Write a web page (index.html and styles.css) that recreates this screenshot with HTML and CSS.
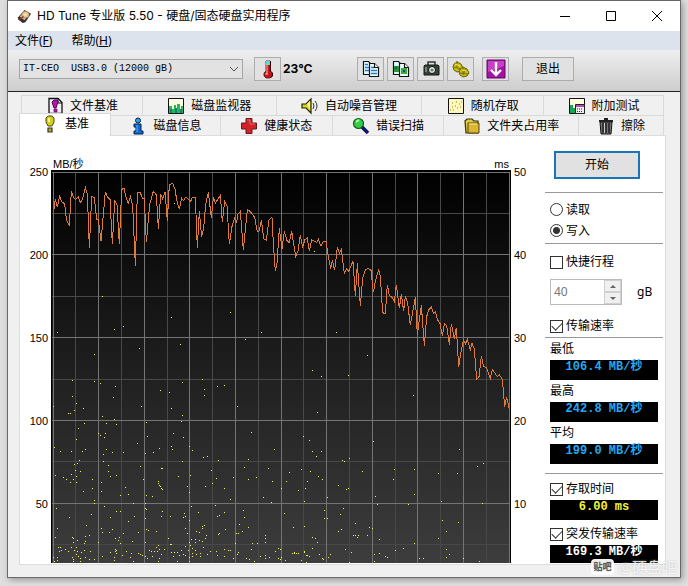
FILE: index.html
```html
<!DOCTYPE html>
<html lang="zh-CN">
<head>
<meta charset="utf-8">
<title>HD Tune 专业版 5.50</title>
<link rel="stylesheet" href="styles.css">
</head>
<body>
<main class="window">
  <header class="titlebar">
    <svg class="app-icon" viewBox="0 0 16 16" aria-hidden="true"><path d="M1 9L8 1l7 4-6 9-3 1-5-4z" fill="#353332"/><path d="M3 8l5-6 5 3-5 7z" fill="#cfc1a9"/><ellipse cx="9" cy="6" rx="4" ry="3.6" fill="#e8c58d" stroke="#907354" stroke-width=".7"/><circle cx="9" cy="6" r="1.2" fill="#fff4d8"/><path d="M3 11l4-3" stroke="#a33b1c" stroke-width="1.5"/></svg>
    <h1 class="title">HD Tune 专业版 5.50 - 硬盘/固态硬盘实用程序</h1>
    <div class="caption-buttons">
      <button aria-label="最小化"><svg viewBox="0 0 12 12"><path d="M1 6.5h10"/></svg></button>
      <button aria-label="最大化"><svg viewBox="0 0 12 12"><path d="M1.500 1.500h9v9h-9z"/></svg></button>
      <button aria-label="关闭"><svg viewBox="0 0 12 12"><path d="M1 1l10 10M11 1L1 11"/></svg></button>
    </div>
  </header>
  <nav class="menu">
    <button>文件(<u>F</u>)</button>
    <button>帮助(<u>H</u>)</button>
  </nav>
  <div class="toolbar">
    <span class="drive">
      <select aria-label="驱动器"><option>IT-CEO&nbsp; USB3.0 (12000 gB)</option></select>
      <svg class="chevron" viewBox="0 0 10 6" aria-hidden="true"><path d="M1 1l4 4 4-4"/></svg>
    </span>
    <button class="tool" aria-label="温度"><svg viewBox="0 0 20 20"><path d="M8 2h4v10l2 2v3l-2 2H8l-2-2v-3l2-2z" fill="#c9161d" stroke="#4d1515" stroke-width=".8"/><path d="M8 2h4v4H8z" fill="#62d6d2"/><path d="M9 5v10" stroke="#ffb0a5"/><path d="M12.500 2v10l2 2v3l-2 2" fill="none" stroke="#300"/><path d="M7.500 15h2" stroke="#fff"/></svg></button>
    <output class="temp">23℃</output>
    <div class="tools">
      <button class="tool" aria-label="复制文本"><svg viewBox="0 0 20 20"><g stroke="#111" stroke-width="1.200"><path d="M2.500 2.500h5l3 3v10h-8z" fill="#e8fbff"/><path d="M8.500 4.500h5l4 4v9h-9z" fill="#f3fbff"/><path d="M13.500 4.500v4h4" fill="#fff"/></g><path d="M4 5.500h3M4 8.500h4M4 11.500h4M10 8.500h3M10 11.500h6M10 14.500h6" stroke="#2379c9" stroke-width="1.300"/></svg></button>
      <button class="tool" aria-label="复制图片"><svg viewBox="0 0 20 20"><g stroke="#111" stroke-width="1.200"><path d="M2.500 2.500h5l3 3v10h-8z" fill="#dff"/><path d="M8.500 4.500h5l4 4v9h-9z" fill="#efffff"/><path d="M13.500 4.500v4h4" fill="#fff"/></g><path d="M3 7h5v6H3z" fill="#27992b"/><path d="M10 9h6v6h-6z" fill="#3aac32"/><path d="M4 8h2v2H4zM12 11h2v2h-2z" fill="#154b9b"/></svg></button>
      <button class="tool" aria-label="截图"><svg viewBox="0 0 20 20"><path d="M7 6V3h7v3" fill="none" stroke="#303531" stroke-width="1.500"/><path d="M4 6h13l1 1v9H3V7z" fill="#38413c" stroke="#151b17"/><circle cx="11" cy="11" r="3.500" fill="#eaf3ed" stroke="#0a0d0b"/><circle cx="11" cy="11" r="1.600" fill="#64776c"/><path d="M4 8h2v5H4z" fill="#768279"/></svg></button>
      <button class="tool" aria-label="设置"><svg viewBox="0 0 20 20"><g fill="#c7bd18" stroke="#68620c"><path d="M3 5l3-2 4 2 2 4-2 3-4 1-3-2-1-3z"/><path d="M9 10l3-2 4 2 2 4-2 3-4 1-3-2-1-3z"/></g><path d="M6 2v7M3 8l7 2M12 8v7M9 14l8 1M15 9l-3 7" stroke="#746d09" fill="none"/><path d="M4 5l5 2M11 11l4 1" stroke="#f5ef6b"/></svg></button>
      <button class="tool tool-save" aria-label="保存"><svg viewBox="0 0 20 20"><path d="M1 1h18v18H1z" fill="#a312a5" stroke="#650866"/><path d="M2 2h16v5L2 13z" fill="#c640c8"/><path d="M10 3v13M5 11l5 5 5-5" fill="none" stroke="#fff" stroke-width="2.400"/></svg></button>
      <button class="exit">退出</button>
    </div>
  </div>

  <section class="body">
    <div class="tabs tabs-back" role="tablist">
      <button role="tab" class="w121"><svg viewBox="0 0 18 18"><path d="M3 1.500h9l4 4v11H3z" fill="#f4eef5" stroke="#111" stroke-width="1.300"/><path d="M12 2v4h4" fill="none" stroke="#111"/><path d="M6 5l2-2h3l1 2-2 6H8z" fill="#b713b5" stroke="#4b074b"/><path d="M8 12h3v3H8z" fill="#b713b5" stroke="#4b074b" stroke-width=".6"/></svg>文件基准</button>
      <button role="tab" class="w134"><svg viewBox="0 0 18 18"><path d="M1.500 1.500h15v15h-15z" fill="#fffde1" stroke="#111"/><path d="M2 16V9h3v3h2V8h2v4h1V7h3v5h1V9h2v7z" fill="#23b95a"/><path d="M3 16v-4h2v4M8 16v-5h2v5M13 16v-4h2v4" fill="#12836d"/></svg>磁盘监视器</button>
      <button role="tab" class="w146"><svg viewBox="0 0 18 18"><path d="M1 7h4l5-5v14l-5-5H1z" fill="#d5d22b" stroke="#262600" stroke-width="1.200"/><path d="M6 7l3-3v9" fill="#fffa8a"/><path d="M12 6q2 3 0 6M14 4q4 5 0 10" fill="none" stroke="#333"/></svg>自动噪音管理</button>
      <button role="tab" class="w122"><svg viewBox="0 0 18 18"><path d="M1.500 1.500h15v15h-15z" fill="#fff9bd" stroke="#111"/><path d="M3 13h1M5 10h1M6 13h1M8 9h1M10 11h1M12 7h1M14 5h1M13 10h1M5 6h1M9 5h1" stroke="#9a7b24" stroke-width="1.200"/></svg>随机存取</button>
      <button role="tab" class="w120"><svg viewBox="0 0 18 18"><path d="M1.500 1.500h15v15h-15z" fill="#fffde1" stroke="#111"/><path d="M2 8h3v3h3v5H2z" fill="#16a55a"/><path d="M7.500 7.500h9v9h-9z" fill="#eee" stroke="#222"/><path d="M8 9h8" stroke="#b64ab7" stroke-width="2"/><path d="M9 12h6M9 14.500h6" stroke="#333" stroke-dasharray="1 1"/></svg>附加测试</button>
    </div>
    <div class="tabs tabs-front" role="tablist">
      <button role="tab" class="w91 active" aria-selected="true"><svg viewBox="0 0 18 18"><path d="M5 3l2-2h4l2 2v4l-2 4H7L5 7z" fill="#d6cf22" stroke="#4a4710"/><path d="M8 3v4" stroke="#fffcb0" stroke-width="1.500"/><path d="M7 13h4v4H7z" fill="#b7ae1a" stroke="#333" stroke-width="1.200"/></svg>基准</button>
      <button role="tab" class="w110"><svg viewBox="0 0 18 18"><circle cx="9" cy="3.500" r="2.500" fill="#32a2ec" stroke="#082344"/><path d="M5 7h7v7h2v3H5v-3h2v-4H5z" fill="#1268db" stroke="#082344"/><path d="M8 8v7" stroke="#55bafc"/></svg>磁盘信息</button>
      <button role="tab" class="w112"><svg viewBox="0 0 18 18"><path d="M6 1.500h6V6h4.500v6H12v4.500H6V12H1.500V6H6z" fill="#d32228" stroke="#5a1e20"/><path d="M7 3h3v4h5" fill="none" stroke="#f26762"/></svg>健康状态</button>
      <button role="tab" class="w112"><svg viewBox="0 0 18 18"><path d="M10 10l6 6" stroke="#101464" stroke-width="3.500"/><circle cx="6.500" cy="6.500" r="5" fill="#32ce43" stroke="#145b22" stroke-width="1.200"/><path d="M4 5l3-2" stroke="#b7ffac" stroke-width="2"/></svg>错误扫描</button>
      <button role="tab" class="w135"><svg viewBox="0 0 18 18"><path d="M2 4l2-2h5l2 2h4v12H3z" fill="#e1c93d" stroke="#37300b" stroke-width="1.200"/><path d="M5 6h11v10H5z" fill="#dab632" stroke="#57460b"/><path d="M6 7h8" stroke="#fff58c"/></svg>文件夹占用率</button>
      <button role="tab" class="w85"><svg viewBox="0 0 18 18"><path d="M3 5h12l-1 12H4z" fill="#777" stroke="#111"/><path d="M2 4h14M7 2h4" stroke="#222" stroke-width="2"/><path d="M6 6v10M9 6v10M12 6v10" stroke="#111" stroke-width="1.300"/><path d="M7.500 6v10" stroke="#ccc"/></svg>擦除</button>
    </div>

    <div class="panel">
      <div class="axis axis-left"><span>250</span><span>200</span><span>150</span><span>100</span><span>50</span></div>
      <div class="plot">
        <div class="units"><span>MB/秒</span><span>ms</span></div>
        <svg class="chart" viewBox="0 0 1380 1179" preserveAspectRatio="none" role="img" aria-label="传输速率与存取时间">
          <defs><linearGradient id="bg" x1="0" y1="0" x2="0" y2="1"><stop offset="0" stop-color="#000"/><stop offset="1" stop-color="#3d3d3d"/></linearGradient></defs>
          <rect width="1380" height="1179" fill="url(#bg)"/>
          <path class="minor" d="M74 7V1179M211 7V1179M349 7V1179M484 7V1179M622 7V1179M757 7V1179M895 7V1179M1033 7V1179M1168 7V1179M1306 7V1179M0 130H1375M0 379H1375M0 628H1375M0 874H1375M0 1123H1375"/>
          <path class="major" d="M7 7V1179M142 7V1179M280 7V1179M415 7V1179M553 7V1179M691 7V1179M826 7V1179M964 7V1179M1099 7V1179M1237 7V1179M1375 7V1179M0 7H1380M0 253H1380M0 502H1380M0 751H1380M0 1000H1380"/>
          <path class="edge" d="M0 1.500H1380M1.500 0V1179M1378.500 0V1179"/>
          <g class="access">
            <path transform="translate(-94 -30)" d="M463 130h3M530 238h3M247 409h3M112 517h3M223 583h3M283 508h3M310 499h3M358 565h3M454 472h3M481 553h3M631 457h3M676 538h3M724 517h3"/>
            <path transform="translate(656 90)" d="M133 154h3M199 397h3"/>
            <path transform="translate(-94 540)" d="M157 91h3M223 94h3M241 100h3M286 109h3M487 97h3M547 88h3M592 109h3M613 106h3M421 121h3M448 127h3M553 118h3M553 136h3M157 139h3M280 142h3M169 160h3M100 169h3M364 169h3M652 169h3M190 175h3M163 181h3M145 190h3M151 190h3M454 175h3M487 196h3M247 199h3M283 208h3M289 223h3M259 220h3M193 220h3M379 217h3M484 214h3M175 235h3M235 250h3M241 256h3M256 250h3M253 262h3M460 250h3M490 262h3M694 247h3M382 259h3M169 268h3M352 280h3M103 292h3M121 304h3M154 304h3M187 304h3M196 298h3M259 298h3M250 313h3M277 307h3M310 307h3M400 307h3M418 295h3M454 289h3M457 298h3M508 289h3M517 301h3M376 310h3M763 298h3M550 322h3M562 319h3M595 331h3M685 328h3M250 334h3M487 334h3M178 331h3M172 340h3M163 343h3M265 346h3M361 349h3M424 355h3M427 355h3M673 352h3M745 355h3M166 361h3M181 364h3M265 364h3M574 361h3M106 376h3M154 373h3M169 379h3M130 382h3M139 388h3M160 388h3M151 397h3M169 397h3M217 388h3M244 397h3M271 379h3M289 376h3M370 388h3M475 379h3M511 376h3M589 385h3M640 382h3M685 388h3M709 382h3M757 394h3M415 394h3M415 400h3M418 406h3M421 409h3M424 415h3M427 418h3M502 409h3M556 409h3M577 400h3M613 415h3M316 412h3M217 415h3M190 424h3M244 424h3M301 436h3M325 433h3M379 436h3M397 439h3M508 427h3M631 448h3M730 442h3M754 457h3M223 451h3M223 460h3M340 460h3M376 460h3M109 475h3M253 469h3M376 475h3M379 478h3M514 469h3M586 466h3M289 484h3M301 484h3M427 484h3M535 487h3M613 487h3M670 481h3M214 493h3M148 502h3M271 502h3M343 499h3M376 505h3M424 499h3M451 499h3M493 490h3M490 502h3M496 499h3M592 499h3M598 496h3M673 502h3M325 514h3M508 511h3M199 526h3M658 523h3M553 526h3M547 529h3M547 535h3M685 532h3M112 535h3M244 535h3M247 547h3M268 547h3M277 538h3M310 550h3M355 547h3M379 538h3M385 541h3M409 544h3M496 535h3M502 550h3M529 544h3M538 547h3M616 538h3M595 553h3M598 550h3M649 550h3M655 550h3M667 544h3M106 562h3M157 562h3M160 565h3M208 556h3M196 559h3M559 556h3M556 565h3M172 571h3M196 574h3M160 577h3M193 580h3M235 577h3M286 565h3M298 562h3M295 571h3M301 580h3M337 574h3M376 577h3M445 565h3M508 577h3M514 568h3M526 568h3M526 577h3M538 571h3M547 574h3M646 580h3M697 580h3M712 580h3M736 556h3M736 565h3M736 577h3M115 592h3M121 592h3M124 601h3M118 604h3M136 598h3M145 604h3M154 592h3M163 601h3M169 592h3M172 604h3M184 607h3M193 601h3M211 604h3M271 607h3M286 598h3M286 604h3M289 601h3M289 610h3M319 604h3M334 610h3M355 610h3M361 613h3M367 616h3M388 601h3M394 604h3M403 604h3M409 592h3M412 604h3M415 586h3M418 598h3M433 598h3M451 583h3M454 583h3M463 607h3M472 607h3M484 601h3M490 613h3M496 589h3M505 601h3M511 586h3M517 595h3M526 601h3M541 610h3M550 592h3M571 604h3M589 604h3M613 598h3M625 601h3M631 601h3M652 613h3M655 607h3M694 598h3M766 604h3M775 595h3M100 622h3M112 622h3M112 631h3M157 622h3M160 628h3M169 613h3M175 619h3M181 625h3M196 622h3M208 628h3M223 628h3M247 619h3M283 622h3M283 631h3M307 616h3M331 622h3M376 619h3M382 625h3M397 619h3M418 625h3M424 613h3M454 607h3M460 619h3M478 616h3M496 616h3M508 622h3M517 610h3M517 619h3M529 613h3M541 619h3M562 613h3M592 616h3M613 619h3M640 625h3M679 625h3M688 628h3M721 619h3M736 616h3M736 625h3M748 622h3M775 625h3M103 635h3M160 635h3M340 635h3M472 635h3M508 635h3M703 635h3M181 635h3M415 635h3"/>
            <path transform="translate(656 540)" d="M292 16h3M127 61h3M154 79h3M235 76h3M430 136h3M142 187h3M100 259h3M118 271h3M310 274h3M13 298h3M127 304h3M154 304h3M139 319h3M568 298h3M217 331h3M223 334h3M238 325h3M640 340h3M622 349h3M94 358h3M121 364h3M58 367h3M277 364h3M373 358h3M433 358h3M505 370h3M562 370h3M145 379h3M157 388h3M370 388h3M7 394h3M49 394h3M112 394h3M205 406h3M34 415h3M106 415h3M85 421h3M229 418h3M235 415h3M433 433h3M172 442h3M316 439h3M103 454h3M4 457h3M322 463h3M415 463h3M514 454h3M637 460h3M163 481h3M220 475h3M43 490h3M211 493h3M163 505h3M172 505h3M517 511h3M565 517h3M256 520h3M103 529h3M70 532h3M214 538h3M205 544h3M298 532h3M307 535h3M529 544h3M250 556h3M256 556h3M265 556h3M262 562h3M292 556h3M127 562h3M136 565h3M505 565h3M142 577h3M328 568h3M433 580h3M25 595h3M31 598h3M16 604h3M67 610h3M73 607h3M73 610h3M79 610h3M85 610h3M103 604h3M103 607h3M109 616h3M112 616h3M118 619h3M127 595h3M148 613h3M157 625h3M160 628h3M175 622h3M181 613h3M226 598h3M244 607h3M313 613h3M328 610h3M346 619h3M352 622h3M376 601h3M400 595h3M448 625h3M460 625h3M529 598h3M538 613h3M529 622h3M580 625h3M31 628h3M34 622h3M46 631h3M94 631h3M109 637h3M238 637h3M313 634h3M628 634h3"/>
          </g>
          <polyline class="speed" transform="translate(-93 -30)" points="102,146 106,118 112,142 119,109 126,126 134,132 139,178 148,197 154,94 161,113 167,119 175,110 181,128 188,116 196,82 202,103 208,263 215,110 223,112 230,178 235,178 243,244 256,95 263,112 270,118 277,253 284,123 291,134 298,253 305,88 312,85 318,112 325,130 331,110 338,136 346,317 352,96 361,98 367,114 373,116 379,247 389,134 400,94 409,104 415,206 422,103 428,116 435,95 442,182 448,74 458,70 465,88 471,124 478,148 485,115 490,122 498,111 512,124 517,113 526,112 532,263 538,154 545,230 551,205 557,134 565,97 574,173 580,112 586,130 594,117 601,106 607,185 614,124 621,137 628,253 636,200 644,174 649,190 654,163 661,154 670,271 682,148 691,155 704,172 712,215 718,212 724,180 731,236 739,240 747,180 756,172 760,250 766,334 771,310 778,205"/>
          <polyline class="speed" transform="translate(657 90)" points="28,86 36,146 43,94 51,122 58,128 65,94 77,169 84,152 91,106 98,143 104,120 112,114 118,154 125,120 140,127 145,118 153,139 160,124 169,124 173,160 182,206 187,181 194,211 202,142 208,160 214,149 223,220 230,206 236,214 249,184 256,287 262,190 271,317 278,235 286,209 295,205 303,211 310,277 317,240 326,208 331,230 338,338 346,341 352,254 358,286 366,292 373,304 379,254 388,325 394,283 401,334 406,287 413,310 421,376 436,292 442,404 454,316 463,437 470,350 476,330 484,322 490,340 496,336 503,360 510,370 517,407 523,371 530,377 538,434 544,371 553,416 559,383 566,502 572,460 580,420 586,432 592,418 601,449 606,430 613,446 620,538 627,530 634,469 641,500 649,502 661,535 667,508 682,530 688,524 697,538 704,620 710,592 718,628"/>
        </svg>
      </div>
      <div class="axis axis-right"><span>50</span><span>40</span><span>30</span><span>20</span><span>10</span></div>

      <aside class="side">
        <button class="start">开始</button>
        <div class="group modes">
          <label class="row"><input type="radio" name="mode">读取</label>
          <label class="row"><input type="radio" name="mode" checked>写入</label>
        </div>
        <div class="group stroke">
          <label class="row"><input type="checkbox">快捷行程</label>
          <div class="spin-row">
            <span class="spin"><input type="text" value="40" aria-label="行程大小" disabled><span class="arrows"><button aria-label="增加" disabled><i class="up"></i></button><button aria-label="减少" disabled><i class="down"></i></button></span></span>
            <span>gB</span>
          </div>
          <label class="row"><input type="checkbox" checked>传输速率</label>
        </div>
        <div class="group rates">
          <span class="name">最低</span><output class="readout">106.4 MB/秒</output>
          <span class="name">最高</span><output class="readout">242.8 MB/秒</output>
          <span class="name">平均</span><output class="readout">199.0 MB/秒</output>
        </div>
        <div class="group times">
          <label class="row"><input type="checkbox" checked>存取时间</label>
          <output class="readout yellow">6.00 ms</output>
          <label class="row"><input type="checkbox" checked>突发传输速率</label>
          <output class="readout white">169.3 MB/秒</output>
        </div>
      </aside>
    </div>
  </section>
  <div class="watermark"><span class="badge">贴吧</span><span>@硬盘吧</span></div>
</main>
</body>
</html>
```
FILE: styles.css
```css
* { box-sizing: border-box; }

body {
  margin: 0;
  padding: 0 7px 7px;
  min-height: 100vh;
  background: #dedede;
  color: #000;
  font: 12px/16px "Noto Sans", "Noto Sans CJK SC", sans-serif;
}

button, input, select { font: inherit; color: inherit; margin: 0; }
button { padding: 0; border: 0; background: none; }

.window {
  position: relative;
  border: 1px solid #686868;
  background: #f0f0f0;
  box-shadow: 2px 2px 6px #999;
}

.titlebar {
  display: flex;
  align-items: center;
  height: 30px;
  padding-left: 9px;
  background: #fff;
}
.app-icon { width: 15px; height: 15px; }
.title {
  flex: 1;
  margin: 0 0 0 5px;
  font-family: Inter, "Noto Sans CJK SC", sans-serif;
  font-size: 12px;
  font-weight: 400;
}
.caption-buttons { display: flex; }
.caption-buttons button { display: grid; place-items: center; width: 46px; height: 28px; }
.caption-buttons svg { width: 12px; height: 12px; fill: none; stroke: #000; }

.menu { display: flex; gap: 19px; height: 19px; padding: 0 7px; background: #dce3ec; }

.toolbar {
  display: flex;
  align-items: center;
  height: 42px;
  padding: 0 106px 4px 11px;
  border-bottom: 1px solid #222;
  background: linear-gradient(#efefef, #cdcdcd);
}
.drive { position: relative; width: 224px; }
.drive select {
  display: block;
  appearance: none;
  width: 100%;
  height: 20px;
  padding: 0 3px;
  border: 1px solid #a5a5a5;
  border-radius: 0;
  background: #e2e2e2;
  font: 10px/16px "Liberation Mono", monospace;
}
.chevron { position: absolute; right: 4px; top: 7px; width: 10px; height: 6px; fill: none; stroke: #555; pointer-events: none; }
.tool, .exit { border: 1px solid #adadad; background: #e1e1e1; height: 24px; }
.tool { display: grid; place-items: center; width: 27px; }
.tool svg { width: 20px; height: 20px; }
.drive + .tool { margin-left: 11px; }
.temp { margin-left: 2px; font-family: Inter, "Noto Sans CJK SC", sans-serif; font-weight: 700; }
.tools { display: flex; gap: 3px; margin-left: auto; }
.tool-save { margin-left: 5px; }
.exit { width: 52px; margin-left: 10px; }

.body { padding: 3px 14px 12px 11px; }
.tabs { display: flex; }
.tabs button {
  display: flex;
  align-items: center;
  justify-content: center;
  gap: 6px;
  height: 20px;
  border: solid #d9d9d9;
  border-width: 1px 1px 0 0;
  white-space: nowrap;
  flex-basis: 0;
}
.tabs svg { width: 18px; height: 18px; }
.tabs-back { padding: 0 2px; }
.tabs-back button:first-child { border-left-width: 1px; }
.tabs-front { padding-right: 2px; align-items: flex-end; }
.tabs-front .active { position: relative; height: 23px; margin: -3px 0 -1px; padding-bottom: 3px; border-left-width: 1px; background: #fff; }
.w85 { flex-grow: 85; }
.w91 { flex-grow: 91; }
.w110 { flex-grow: 110; }
.w112 { flex-grow: 112; }
.w120 { flex-grow: 120; }
.w121 { flex-grow: 121; }
.w122 { flex-grow: 122; }
.w134 { flex-grow: 134; }
.w135 { flex-grow: 135; }
.w146 { flex-grow: 146; }

.panel {
  display: grid;
  grid-template-columns: 31px minmax(0, 1fr) 34px 118px;
  padding: 0 2px 1px 0;
  border: 1px solid #dcdcdc;
  background: #fff;
}
.axis { display: flex; flex-direction: column; padding-top: 29px; font: 11px/14px "Liberation Sans", sans-serif; }
.axis span { height: 83px; }
.axis span:last-child { height: 14px; }
.axis-left { text-align: right; padding-right: 3px; }
.axis-right { padding-left: 3px; }
.units {
  display: flex;
  justify-content: space-between;
  align-items: flex-end;
  height: 34px;
  padding: 0 2px;
  font: 11px/12px "Liberation Sans", "Noto Sans CJK SC", sans-serif;
}
.chart { display: block; width: 100%; height: 393px; shape-rendering: crispEdges; }
.chart path, .chart polyline { fill: none; stroke-width: 3; }
.chart .minor { stroke: #484848; }
.chart .major { stroke: #747474; }
.chart .edge { stroke: #000; }
.chart .access path { stroke: #f4f452; }
.chart .speed { stroke: #dd7a3c; }

.start { width: 86px; height: 28px; margin: 15px 9px 13px; border: 2px solid #1b74b5; background: #e1e1e1; }
.group { border-top: 1px solid #999; }
.row { display: flex; align-items: center; gap: 3px; height: 20px; padding-left: 5px; white-space: nowrap; }
.modes { padding: 6px 0 2px; }
.modes .row { height: 21px; }
.row input { appearance: none; flex: none; width: 13px; height: 13px; border: 1px solid #333; background: #fff; }
.row input[type="radio"] { border-radius: 50%; }
.row input[type="radio"]:checked { background: radial-gradient(circle, #333 0 3px, #fff 4px); }
.row input[type="checkbox"]:checked { display: grid; place-items: center; }
.row input[type="checkbox"]:checked::before {
  content: "";
  width: 9px;
  height: 5px;
  margin-top: -2px;
  border: solid #333;
  border-width: 0 0 1px 1px;
  transform: rotate(-45deg);
}
.stroke { padding: 8px 0 1px; }
.spin-row { display: flex; align-items: center; gap: 15px; margin: 7px 0 11px 5px; }
.spin { display: flex; width: 72px; height: 26px; border: 1px solid #bbb; }
.spin input { flex: 1; min-width: 0; padding: 0 3px; border: 0; background: #fff; color: #777; }
.arrows { display: flex; flex-direction: column; width: 17px; }
.arrows button { display: grid; place-items: center; flex: 1; border: 1px solid #d0d0d0; background: #f0f0f0; }
.arrows i { border: 3px solid transparent; }
.arrows .up { border-top: 0; border-bottom-color: #666; }
.arrows .down { border-bottom: 0; border-top-color: #666; }

.rates { padding: 0 5px 9px; }
.name { display: block; height: 22px; line-height: 22px; }
.readout {
  display: block;
  height: 20px;
  background: #000;
  color: #24a8f2;
  font: bold 12px/14px "Liberation Mono", "Noto Sans CJK SC", monospace;
  text-align: center;
}
.times { padding: 5px 5px 0; }
.times .row { padding-left: 0; margin-bottom: 1px; }
.times .readout + .row { margin-top: 4px; }
.times .readout:last-child { height: 18px; }
.yellow { color: #f4f43a; }
.white { color: #fff; }

.watermark {
  position: absolute;
  right: 3px;
  bottom: 2px;
  display: flex;
  align-items: center;
  gap: 5px;
  color: #fffc;
  font-size: 15px;
  line-height: 16px;
  text-shadow: 0 0 2px #bbb;
  pointer-events: none;
}
.badge { padding: 0 2px; border-radius: 4px; background: #fffffff0; color: #555; font-size: 9px; font-weight: 700; }
```
